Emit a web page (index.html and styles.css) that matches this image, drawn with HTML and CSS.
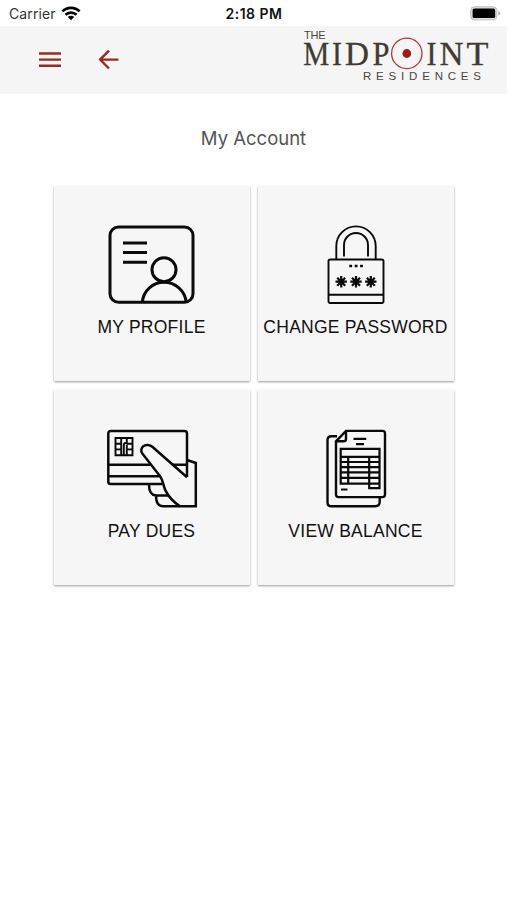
FILE: index.html
```html
<!DOCTYPE html>
<html lang="en">
<head>
  <meta charset="UTF-8">
  <meta name="viewport" content="width=device-width, initial-scale=1.0">
  <title>My Account</title>
  <link rel="stylesheet" href="styles.css">
</head>
<body>
  <!-- Status bar -->
  <div class="status-bar">
    <div class="carrier">
      <span>Carrier</span>
      <svg width="20" height="15" viewBox="0 0 20 15">
        <g fill="none" stroke="#000" stroke-width="2.7">
          <path d="M1.4 5.4a12.3 12.3 0 0 1 17.2 0"/>
          <path d="M4.5 8.8a7.9 7.9 0 0 1 11 0"/>
        </g>
        <path d="M10 14.2 6.8 11a4.6 4.6 0 0 1 6.4 0z"/>
      </svg>
    </div>
    <div class="time">2:18 PM</div>
    <svg class="battery" width="31" height="15" viewBox="0 0 31 15">
      <rect x=".8" y=".8" width="26" height="13" rx="3.5" fill="#e2e2e2" stroke="#bdbdbd"/>
      <rect x="2.6" y="2.6" width="22.6" height="9.4" rx="1.5"/>
      <path d="M28.4 5v4.6q1.8-.7 1.8-2.3T28.4 5z" fill="#aaa"/>
    </svg>
  </div>

  <!-- Header -->
  <header class="header">
    <button class="nav-btn" aria-label="Menu">
      <svg width="24" height="18" viewBox="0 0 24 18">
        <path d="M1 2.5h22M1 8.6h22M1 14.7h22"/>
      </svg>
    </button>
    <button class="nav-btn back" aria-label="Back">
      <svg width="22" height="22" viewBox="0 0 22 22">
        <path d="M20.5 10.6H2.5M11 1.7 2.1 10.6l8.9 8.9"/>
      </svg>
    </button>
    <svg class="logo" width="192" height="60" viewBox="300 28 192 60">
      <text class="logo-small" x="304" y="39.4" textLength="21.5">THE</text>
      <g class="logo-big">
        <text x="303.3" y="64.6" textLength="26" lengthAdjust="spacingAndGlyphs">M</text>
        <text x="332" y="64.6" textLength="10" lengthAdjust="spacingAndGlyphs">I</text>
        <text x="345" y="64.6" textLength="24" lengthAdjust="spacingAndGlyphs">D</text>
        <text x="372.5" y="64.6" textLength="17" lengthAdjust="spacingAndGlyphs">P</text>
        <text x="426.5" y="64.6" textLength="10" lengthAdjust="spacingAndGlyphs">I</text>
        <text x="439.5" y="64.6" textLength="24" lengthAdjust="spacingAndGlyphs">N</text>
        <text x="466.5" y="64.6" textLength="22" lengthAdjust="spacingAndGlyphs">T</text>
      </g>
      <circle cx="406.8" cy="53.4" r="15.2" fill="none" stroke="#b5383a" stroke-width="1.3"/>
      <circle cx="406.8" cy="53.5" r="4.4" fill="#9c1c1c"/>
      <text class="logo-sub" x="363" y="80.4" textLength="118">RESIDENCES</text>
    </svg>
  </header>

  <h1 class="title">My Account</h1>

  <!-- Account options -->
  <main class="grid">
    <a class="card">
      <svg width="96" height="84" viewBox="104 222 96 84" stroke-width="3">
        <rect x="110" y="227" width="83" height="75.2" rx="8.5"/>
        <path d="M123 243h24M123 252.6h24M123 262.2h24"/>
        <circle cx="164" cy="269.7" r="12"/>
        <path d="M142.3 302c1.2-11.5 10.5-19.8 21.7-19.8S185 290.5 186.2 302"/>
      </svg>
      <span>MY PROFILE</span>
    </a>
    <a class="card">
      <svg width="96" height="84" viewBox="308 222 96 84" stroke-width="1.9">
        <rect x="328.5" y="259.5" width="55" height="43.5" rx="1.8"/>
        <path d="M328.5 294.8h55M336.3 259v-13a19.7 19.7 0 0 1 39.4 0v13M344 256.5V245a12 12 0 0 1 24 0v11.5"/>
        <path d="M349.3 266h2.8M354.7 266h2.8M360.1 266h2.8" stroke-width="2.6"/>
        <g stroke-width="2.2">
          <path d="M341.2 276v11.5M335.5 281.7h11.4M337.2 277.7l8 8M345.2 277.7l-8 8"/>
          <path d="M356 276v11.5M350.3 281.7h11.4M352 277.7l8 8M360 277.7l-8 8"/>
          <path d="M370.8 276v11.5M365.1 281.7h11.4M366.8 277.7l8 8M374.8 277.7l-8 8"/>
        </g>
      </svg>
      <span>CHANGE PASSWORD</span>
    </a>
    <a class="card">
      <svg width="96" height="84" viewBox="104 426 96 84" stroke-width="2.5">
        <path d="M187 477v-43.5q0-2.6-2.6-2.6h-73.5q-2.6 0-2.6 2.6v48q0 2.6 2.6 2.6H162"/>
        <path d="M108.5 464.8h42M173 464.8h14M108.5 476.2h51"/>
        <path d="M115.5 438h17v17.2h-17zM121.2 438v17.2M126.800 455v-10.200M123.800 455v-10q0-2 2-2h1v-5M115.500 443.700h5.700M115.500 449.400h5.700M126.800 443.700h5.700M126.800 449.400h5.700" stroke-width="1.900"/>
        <path d="M187 477.200 152.600 447c-2.600-2.300-6.700-2.900-9.300-.8-2.500 2-2.700 5.300-.8 7.600l17.600 22.400c3 4 3 9.300 5.300 14.200 3.400 7 8.400 11.800 14.600 16"/>
        <path d="M187 460l8.800 3v43.300h-32.500c-4.600 0-7.300-4-7.300-10.800h12.700M149 484.500c0 6.500 2.600 10.700 7 11"/>
      </svg>
      <span>PAY DUES</span>
    </a>
    <a class="card">
      <svg width="96" height="84" viewBox="308 426 96 84" stroke-width="2.4">
        <path d="M337 436.300h-5.500q-4 0-4 4v62q0 4 4 4h43.700q4.500 0 4.500-4.500v-4"/>
        <path d="M346 430.900h36.500q2.500 0 2.500 2.500v61.200q0 2.500-2.500 2.500h-44q-2.500 0-2.500-2.500v-53.300zM346 431v8q0 2.300-2.300 2.300h-7.500"/>
        <path d="M353.500 438.900h12.800M356 444.200h8M341 489.500h6.500" stroke-width="2.200"/>
        <path d="M340.700 448.900h38.800v39.300h-10.300v-4.500h-28.500zM340.700 456.800h38.800M340.700 462h38.800M340.700 467.200h38.800M340.700 472.400h38.800M340.700 477.800h38.800M369.200 483.600h10.300M348.200 456.800v26.900M369.200 456.800v26.900" stroke-width="2.200"/>
      </svg>
      <span>VIEW BALANCE</span>
    </a>
  </main>
</body>
</html>
```
FILE: styles.css
```css
* {
  box-sizing: border-box;
}
body {
  margin: 0;
  min-height: 900px;
  background: #fff;
  font-family: "Liberation Sans", Arial, sans-serif;
  color: #111;
}
.status-bar {
  display: grid;
  grid-template-columns: 1fr auto 1fr;
  align-items: center;
  height: 26px;
  padding: 0 6px 0 7px;
  font-family: Inter, sans-serif;
  font-size: 14px;
}
.carrier {
  display: flex;
  align-items: center;
  gap: 5px;
  padding-left: 2px;
  color: #333;
  letter-spacing: 0.1px;
}
.time {
  font-weight: 600;
  color: #111;
  padding-top: 1px;
  letter-spacing: 0.5px;
}
.battery {
  justify-self: end;
}

/* Header */
.header {
  display: flex;
  align-items: center;
  height: 68px;
  padding: 0 15px 0 38px;
  background: #f5f5f5;
}
.nav-btn {
  display: flex;
  padding: 0;
  border: none;
  background: none;
}
.nav-btn svg {
  fill: none;
  stroke: #982b20;
  stroke-width: 2.4;
}
.back {
  margin-left: 36px;
}
.logo {
  margin-left: auto;
  margin-top: -4px;
}
.logo-small {
  font-size: 11px;
  fill: #4a4540;
}
.logo-big {
  font-family: "Liberation Serif", serif;
  font-size: 34px;
  fill: #3f3b33;
  stroke: #3f3b33;
  stroke-width: 0.3;
}
.logo-sub {
  font-size: 11.5px;
  fill: #4a4540;
}

.title {
  margin: 0;
  padding-top: 33px;
  height: 92px;
  font-family: Inter, sans-serif;
  font-size: 18.5px;
  font-weight: 400;
  line-height: 23px;
  text-align: center;
  color: #555;
}

/* Cards */
.grid {
  display: grid;
  grid-template-columns: 196px 196px;
  gap: 9px 8px;
  justify-content: center;
}
.card {
  display: flex;
  flex-direction: column;
  align-items: center;
  height: 195px;
  padding-top: 36px;
  background: #f6f6f6;
  box-shadow: 0 1px 2px rgba(0, 0, 0, 0.4);
}
.card svg {
  fill: none;
  stroke: #0a0a0a;
}
.card span {
  margin-top: 11px;
  font-size: 17.5px;
  line-height: 20px;
  letter-spacing: 0.25px;
  white-space: nowrap;
}
```
